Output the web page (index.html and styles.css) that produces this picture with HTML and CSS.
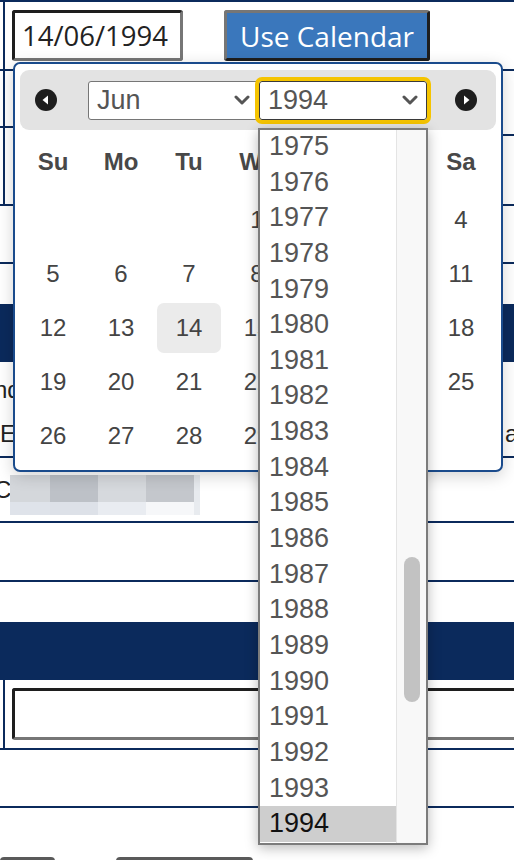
FILE: index.html
```html
<!DOCTYPE html>
<html lang="en">
<head>
<meta charset="utf-8">
<title>Date picker</title>
<link rel="stylesheet" href="styles.css">
</head>
<body>
<div class="page">
  <div class="row r-top vline">
    <input class="date-in" type="text" value="14/06/1994">
    <button class="cal-btn" type="button">Use Calendar</button>
  </div>
  <div class="r-split">
    <div class="col">
      <div class="sub sl1 vline"></div>
      <div class="sub sl2 vline"></div>
    </div>
    <div class="col">
      <div class="sub sr1"></div>
      <div class="sub sr2"></div>
    </div>
  </div>
  <div class="row r-plain"></div>
  <div class="gap"></div>
  <div class="navy"></div>
  <div class="row r-text">
    <div class="tcell">
      <div class="ln cut">nd</div>
      <div class="ln">E</div>
    </div>
    <div class="tcell">
      <div class="ln">&nbsp;</div>
      <div class="ln">as</div>
    </div>
  </div>
  <div class="row r-blur">
    <div class="ccell">C</div>
    <div class="blur">
      <div class="b1"></div><div class="b2"></div><div class="b3"></div><div class="b4"></div><div class="b5"></div>
      <div class="b6"></div><div class="b7"></div><div class="b8"></div><div class="b9"></div><div class="b10"></div>
    </div>
  </div>
  <div class="row r-empty"></div>
  <div class="gap"></div>
  <div class="navy"></div>
  <div class="row r-input vline">
    <input class="wide-in" type="text" value="">
  </div>
  <div class="row r-plain"></div>
  <div class="r-buttons">
    <div class="fb fb1"></div>
    <div class="fb fb2"></div>
  </div>
</div>

<div class="cal">
  <div class="cal-head">
    <svg class="nav" viewBox="0 0 22 22" width="22" height="22"><circle cx="11" cy="11" r="11" fill="#1e1e1e"/><polygon points="13,6.5 13,15.5 7.5,11" fill="#fff"/></svg>
    <div class="sel sel-m"><span>Jun</span><svg viewBox="0 0 16 10" width="16" height="10"><polyline points="2,2 8,8 14,2" fill="none" stroke="#555" stroke-width="3" stroke-linecap="round" stroke-linejoin="round"/></svg></div>
    <div class="sel sel-y"><span>1994</span><svg viewBox="0 0 16 10" width="16" height="10"><polyline points="2,2 8,8 14,2" fill="none" stroke="#555" stroke-width="3" stroke-linecap="round" stroke-linejoin="round"/></svg></div>
    <svg class="nav nav-next" viewBox="0 0 22 22" width="22" height="22"><circle cx="11" cy="11" r="11" fill="#1e1e1e"/><polygon points="9,6.5 9,15.5 14.5,11" fill="#fff"/></svg>
  </div>
  <div class="grid">
    <div class="dh">Su</div><div class="dh">Mo</div><div class="dh">Tu</div><div class="dh">We</div><div class="dh">Th</div><div class="dh">Fr</div><div class="dh">Sa</div>
    <div class="d"></div><div class="d"></div><div class="d"></div><div class="d">1</div><div class="d">2</div><div class="d">3</div><div class="d">4</div>
    <div class="d">5</div><div class="d">6</div><div class="d">7</div><div class="d">8</div><div class="d">9</div><div class="d">10</div><div class="d">11</div>
    <div class="d">12</div><div class="d">13</div><div class="d"><span class="today">14</span></div><div class="d">15</div><div class="d">16</div><div class="d">17</div><div class="d">18</div>
    <div class="d">19</div><div class="d">20</div><div class="d">21</div><div class="d">22</div><div class="d">23</div><div class="d">24</div><div class="d">25</div>
    <div class="d">26</div><div class="d">27</div><div class="d">28</div><div class="d">29</div><div class="d">30</div><div class="d"></div><div class="d"></div>
  </div>
</div>

<div class="list">
  <div class="items">
    <div class="opt">1975</div>
    <div class="opt">1976</div>
    <div class="opt">1977</div>
    <div class="opt">1978</div>
    <div class="opt">1979</div>
    <div class="opt">1980</div>
    <div class="opt">1981</div>
    <div class="opt">1982</div>
    <div class="opt">1983</div>
    <div class="opt">1984</div>
    <div class="opt">1985</div>
    <div class="opt">1986</div>
    <div class="opt">1987</div>
    <div class="opt">1988</div>
    <div class="opt">1989</div>
    <div class="opt">1990</div>
    <div class="opt">1991</div>
    <div class="opt">1992</div>
    <div class="opt">1993</div>
    <div class="opt opt-sel">1994</div>
  </div>
  <div class="track"><div class="thumb"></div></div>
</div>
</body>
</html>
```

FILE: styles.css
```css
* { box-sizing: border-box; }
html, body { margin: 0; padding: 0; overflow: hidden; background: #fff; }
body {
  width: 514px;
  height: 860px;
  position: relative;
  font-family: "Liberation Sans", Arial, sans-serif;
  color: #222;
}
.page { width: 514px; }

.row { border-bottom: 2px solid #0b2a5c; }
.vline { background: linear-gradient(#0b2a5c, #0b2a5c) 3px 0 / 2px 100% no-repeat; }

.r-top {
  height: 71px;
  border-top: 2px solid #0b2a5c;
  display: flex;
  align-items: flex-start;
  gap: 41px;
  padding: 8px 0 0 12px;
}
.date-in {
  width: 171px;
  height: 51px;
  margin: 0;
  border: 3px solid;
  border-color: #1e1e1e #767676 #767676 #1e1e1e;
  border-radius: 3px;
  padding: 0 4px 0 7px;
  font-family: "Open Sans", "Noto Sans", sans-serif;
  font-size: 27.5px;
  color: #222;
  background: #fff;
  outline: none;
}
.cal-btn {
  height: 51px;
  width: 206px;
  margin: 0;
  padding: 0 10px;
  border: 3px solid;
  border-color: #767676 #1e1e1e #1e1e1e #767676;
  border-radius: 3px;
  background: #3a77bc;
  color: #fff;
  font-family: "Open Sans", "Noto Sans", sans-serif;
  font-size: 28px;
  line-height: 1;
  white-space: nowrap;
}

.r-split { display: flex; }
.col { flex: 1; }
.sub { border-bottom: 2px solid #0b2a5c; }
.sl1 { height: 57px; }
.sl2 { height: 78px; }
.sr1 { height: 65px; }
.sr2 { height: 70px; }

.r-plain { height: 58px; }
.gap { height: 40px; }
.navy { height: 58px; background: #0b2a5c; }

.r-text {
  height: 96px;
  padding-top: 6px;
  display: grid;
  grid-template-columns: 505px 1fr;
  font-size: 24px;
  color: #222;
}
.ln { line-height: 44px; white-space: nowrap; }
.cut { text-indent: -6px; }

.r-blur {
  height: 65px;
  padding-top: 17px;
  display: grid;
  grid-template-columns: 10px 190px;
  align-items: start;
}
.ccell {
  font-size: 24px;
  line-height: 26px;
  padding-top: 2px;
  text-indent: -6px;
  white-space: nowrap;
}
.blur {
  display: grid;
  grid-template-columns: 40px 48px 48px 48px 6px;
  grid-template-rows: 27px 13px;
}
.b1 { background: #d4d7db; }
.b2 { background: #bdc1c7; }
.b3 { background: #d6d9dd; }
.b4 { background: #c4c7cc; }
.b5 { background: #e7eaee; }
.b6 { background: #dfe3ea; }
.b7 { background: #dde1e8; }
.b8 { background: #e9ecf1; }
.b9 { background: #f6f7f9; }
.b10 { background: #e8ebef; }

.r-empty { height: 59px; }

.r-input {
  height: 70px;
  padding: 8px 0 0 12px;
}
.wide-in {
  display: block;
  width: 520px;
  height: 52px;
  margin: 0;
  border: 3px solid;
  border-color: #1e1e1e #767676 #767676 #1e1e1e;
  border-radius: 3px;
  background: #fff;
  outline: none;
}

.r-buttons {
  padding-top: 49px;
  display: flex;
  gap: 61px;
}
.fb {
  height: 12px;
  border: 3px solid #5a5a5a;
  border-bottom: 0;
  border-radius: 4px 4px 0 0;
  background: #fff;
}
.fb1 { width: 55px; }
.fb2 { width: 137px; }

/* calendar popup */
.cal {
  position: absolute;
  left: 13px;
  top: 62px;
  width: 490px;
  height: 410px;
  border: 2px solid #1a4b8c;
  border-radius: 7px;
  background: #fff;
  padding: 6px 5px 7px;
  box-shadow: 0 4px 16px rgba(0, 0, 0, 0.18);
  z-index: 2;
}
.cal-head {
  display: flex;
  align-items: center;
  height: 60px;
  background: #e3e3e3;
  border-radius: 9px;
  padding-left: 15px;
}
.nav { display: block; flex: none; }
.nav-next { margin-left: 28px; }
.sel {
  display: flex;
  align-items: center;
  justify-content: space-between;
  height: 39px;
  background: #fff;
  border: 1px solid #767676;
  border-radius: 3px;
  padding: 0 8px 0 8px;
  font-size: 27px;
  color: #555;
}
.sel svg { display: block; }
.sel-m { width: 171px; margin-left: 31px; }
.sel-y {
  width: 168px;
  border-color: #3a3a3a;
  outline: 4px solid #f5c400;
  position: relative;
}

.grid {
  display: grid;
  grid-template-columns: repeat(7, 68px);
  grid-template-rows: 63px repeat(5, 54px);
  margin-left: -1px;
}
.dh {
  display: flex;
  align-items: center;
  justify-content: center;
  font-weight: bold;
  font-size: 24px;
  color: #484848;
}
.d {
  display: flex;
  align-items: center;
  justify-content: center;
  font-size: 24px;
  color: #444;
}
.today {
  display: flex;
  align-items: center;
  justify-content: center;
  width: 64px;
  height: 50px;
  border-radius: 7px;
  background: #ebebeb;
}

/* native year list */
.list {
  position: absolute;
  left: 258px;
  top: 128px;
  width: 170px;
  height: 717px;
  border: 2px solid #7c7c7c;
  background: #fff;
  display: flex;
  overflow: hidden;
  box-shadow: 0 3px 12px rgba(0, 0, 0, 0.28);
  z-index: 3;
}
.items { flex: 1; margin-top: -1px; }
.opt {
  height: 35.65px;
  line-height: 35.65px;
  padding-left: 9px;
  font-size: 27px;
  color: #555;
}
.opt-sel { background: #cecece; color: #111; }
.track {
  width: 30px;
  flex: none;
  background: #f8f8f8;
  border-left: 1px solid #e4e4e4;
  padding: 427px 0 0 7px;
}
.thumb {
  width: 16px;
  height: 145px;
  border-radius: 8px;
  background: #c2c2c2;
}
```
